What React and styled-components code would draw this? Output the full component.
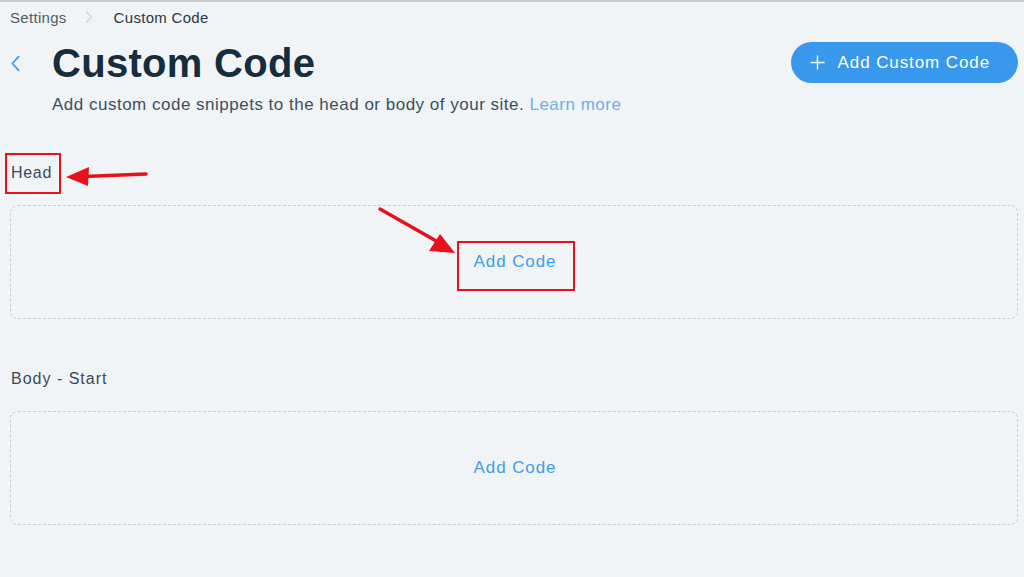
import React from 'react'
import styled, { createGlobalStyle } from 'styled-components'

const Global = createGlobalStyle`
  html, body { margin: 0; padding: 0; background: #f0f4f7; }
  body { font-family: "Liberation Sans", Arial, sans-serif; }
`

const Page = styled.div`
  position: relative;
  width: 1024px;
  height: 577px;
  box-sizing: border-box;
  border-top: 2px solid #c9cdd1;
  padding: 0 6px 0 10px;
  background: #f0f4f7;
  overflow: hidden;
`

const Crumbs = styled.div`
  display: flex;
  align-items: center;
  height: 30px;
  font-size: 15px;
  letter-spacing: 0.3px;
  color: #4f5a66;
`

const CrumbSep = styled.span`
  display: flex;
  width: 49px;
  justify-content: center;
  margin-left: -2px;
`

const Crumb = styled.span`
  color: ${p => (p.current ? '#2b3848' : '#4f5a66')};
`

const Header = styled.div`
  display: flex;
  align-items: flex-start;
  justify-content: space-between;
  margin-top: 10px;
`

const TitleRow = styled.div`
  display: flex;
  align-items: center;
  height: 42px;
`

const Back = styled.button`
  display: flex;
  align-items: center;
  width: 42px;
  height: 42px;
  padding: 0;
  border: 0;
  background: none;
  cursor: pointer;
`

const Title = styled.h1`
  margin: 0;
  font-size: 40px;
  font-weight: 700;
  letter-spacing: 0.3px;
  color: #162d3d;
  line-height: 42px;
`

const Subtitle = styled.p`
  margin: 11px 0 0 42px;
  font-size: 17px;
  letter-spacing: 0.5px;
  color: #3d4f5e;
  line-height: 20px;
`

const Learn = styled.a`
  color: #6ab0ee;
  text-decoration: none;
  cursor: pointer;
`

const PrimaryButton = styled.button`
  display: flex;
  align-items: center;
  gap: 13px;
  height: 41px;
  padding: 0 28px 0 19px;
  border: 0;
  border-radius: 21px;
  background: #3899ec;
  color: #fff;
  font-family: inherit;
  font-size: 17px;
  letter-spacing: 0.9px;
  cursor: pointer;
`

const Section = styled.section`
  margin-top: ${p => p.top}px;
`

const Label = styled.div`
  position: relative;
  display: inline-block;
  margin-left: 1px;
  font-size: 16px;
  letter-spacing: ${p => p.spacing || 0.7}px;
  color: #3b4a5a;
  line-height: 20px;
  &::after {
    content: '';
    display: ${p => (p.marked ? 'block' : 'none')};
    position: absolute;
    left: -6px;
    right: -9px;
    top: -10px;
    bottom: -11px;
    border: 2px solid #e8101a;
  }
`

const Drop = styled.div`
  display: flex;
  align-items: center;
  justify-content: center;
  height: 114px;
  margin-top: 22px;
  box-sizing: border-box;
  border: 1px dashed #c8cdd2;
  border-radius: 8px;
`

const AddCode = styled.a`
  position: relative;
  font-size: 17px;
  letter-spacing: 0.9px;
  color: #3f9cee;
  cursor: pointer;
  margin-left: 2px;
  &::after {
    content: '';
    display: ${p => (p.marked ? 'block' : 'none')};
    position: absolute;
    left: -17px;
    right: -19px;
    top: -11px;
    bottom: -19px;
    border: 2px solid #e8101a;
  }
`

const Arrows = styled.svg`
  position: absolute;
  left: 0;
  top: 0;
  pointer-events: none;
`

const Chevron = ({ color, w, h, sw, dir = 'left' }) => (
  <svg width={w} height={h} viewBox="0 0 10 16" fill="none">
    <path
      d={dir === 'left' ? 'M8 1.5 L2 8 L8 14.5' : 'M2 1.5 L8 8 L2 14.5'}
      stroke={color}
      strokeWidth={sw}
      strokeLinecap="round"
      strokeLinejoin="round"
    />
  </svg>
)

const App = () => (
  <Page>
    <Global />
    <Crumbs>
      <Crumb>Settings</Crumb>
      <CrumbSep>
        <Chevron dir="right" color="#c3c8cd" w={8} h={14} sw={1.3} />
      </CrumbSep>
      <Crumb current>Custom Code</Crumb>
    </Crumbs>
    <Header>
      <div>
        <TitleRow>
          <Back aria-label="Back">
            <Chevron color="#3899ec" w={11} h={17} sw={1.6} />
          </Back>
          <Title>Custom Code</Title>
        </TitleRow>
        <Subtitle>
          Add custom code snippets to the head or body of your site. <Learn>Learn more</Learn>
        </Subtitle>
      </div>
      <PrimaryButton>
        <svg width="15" height="15" viewBox="0 0 15 15">
          <path d="M7.5 0.5 V14.5 M0.5 7.5 H14.5" stroke="#fff" strokeWidth="1.4" />
        </svg>
        Add Custom Code
      </PrimaryButton>
    </Header>

    <Section top={48}>
      <Label marked>Head</Label>
      <Drop>
        <AddCode marked>Add Code</AddCode>
      </Drop>
    </Section>

    <Section top={50}>
      <Label spacing={1}>Body - Start</Label>
      <Drop>
        <AddCode>Add Code</AddCode>
      </Drop>
    </Section>

    <Arrows width="1024" height="577" viewBox="0 0 1024 577">
      <line x1="146" y1="172" x2="84" y2="174.5" stroke="#e8101a" strokeWidth="3.5" strokeLinecap="round" />
      <polygon points="66,175 89,165 88,184" fill="#e8101a" />
      <line x1="380" y1="207" x2="438" y2="240" stroke="#e8101a" strokeWidth="3.5" strokeLinecap="round" />
      <polygon points="455,251 429,249 440,232" fill="#e8101a" />
    </Arrows>
  </Page>
)

export default App
